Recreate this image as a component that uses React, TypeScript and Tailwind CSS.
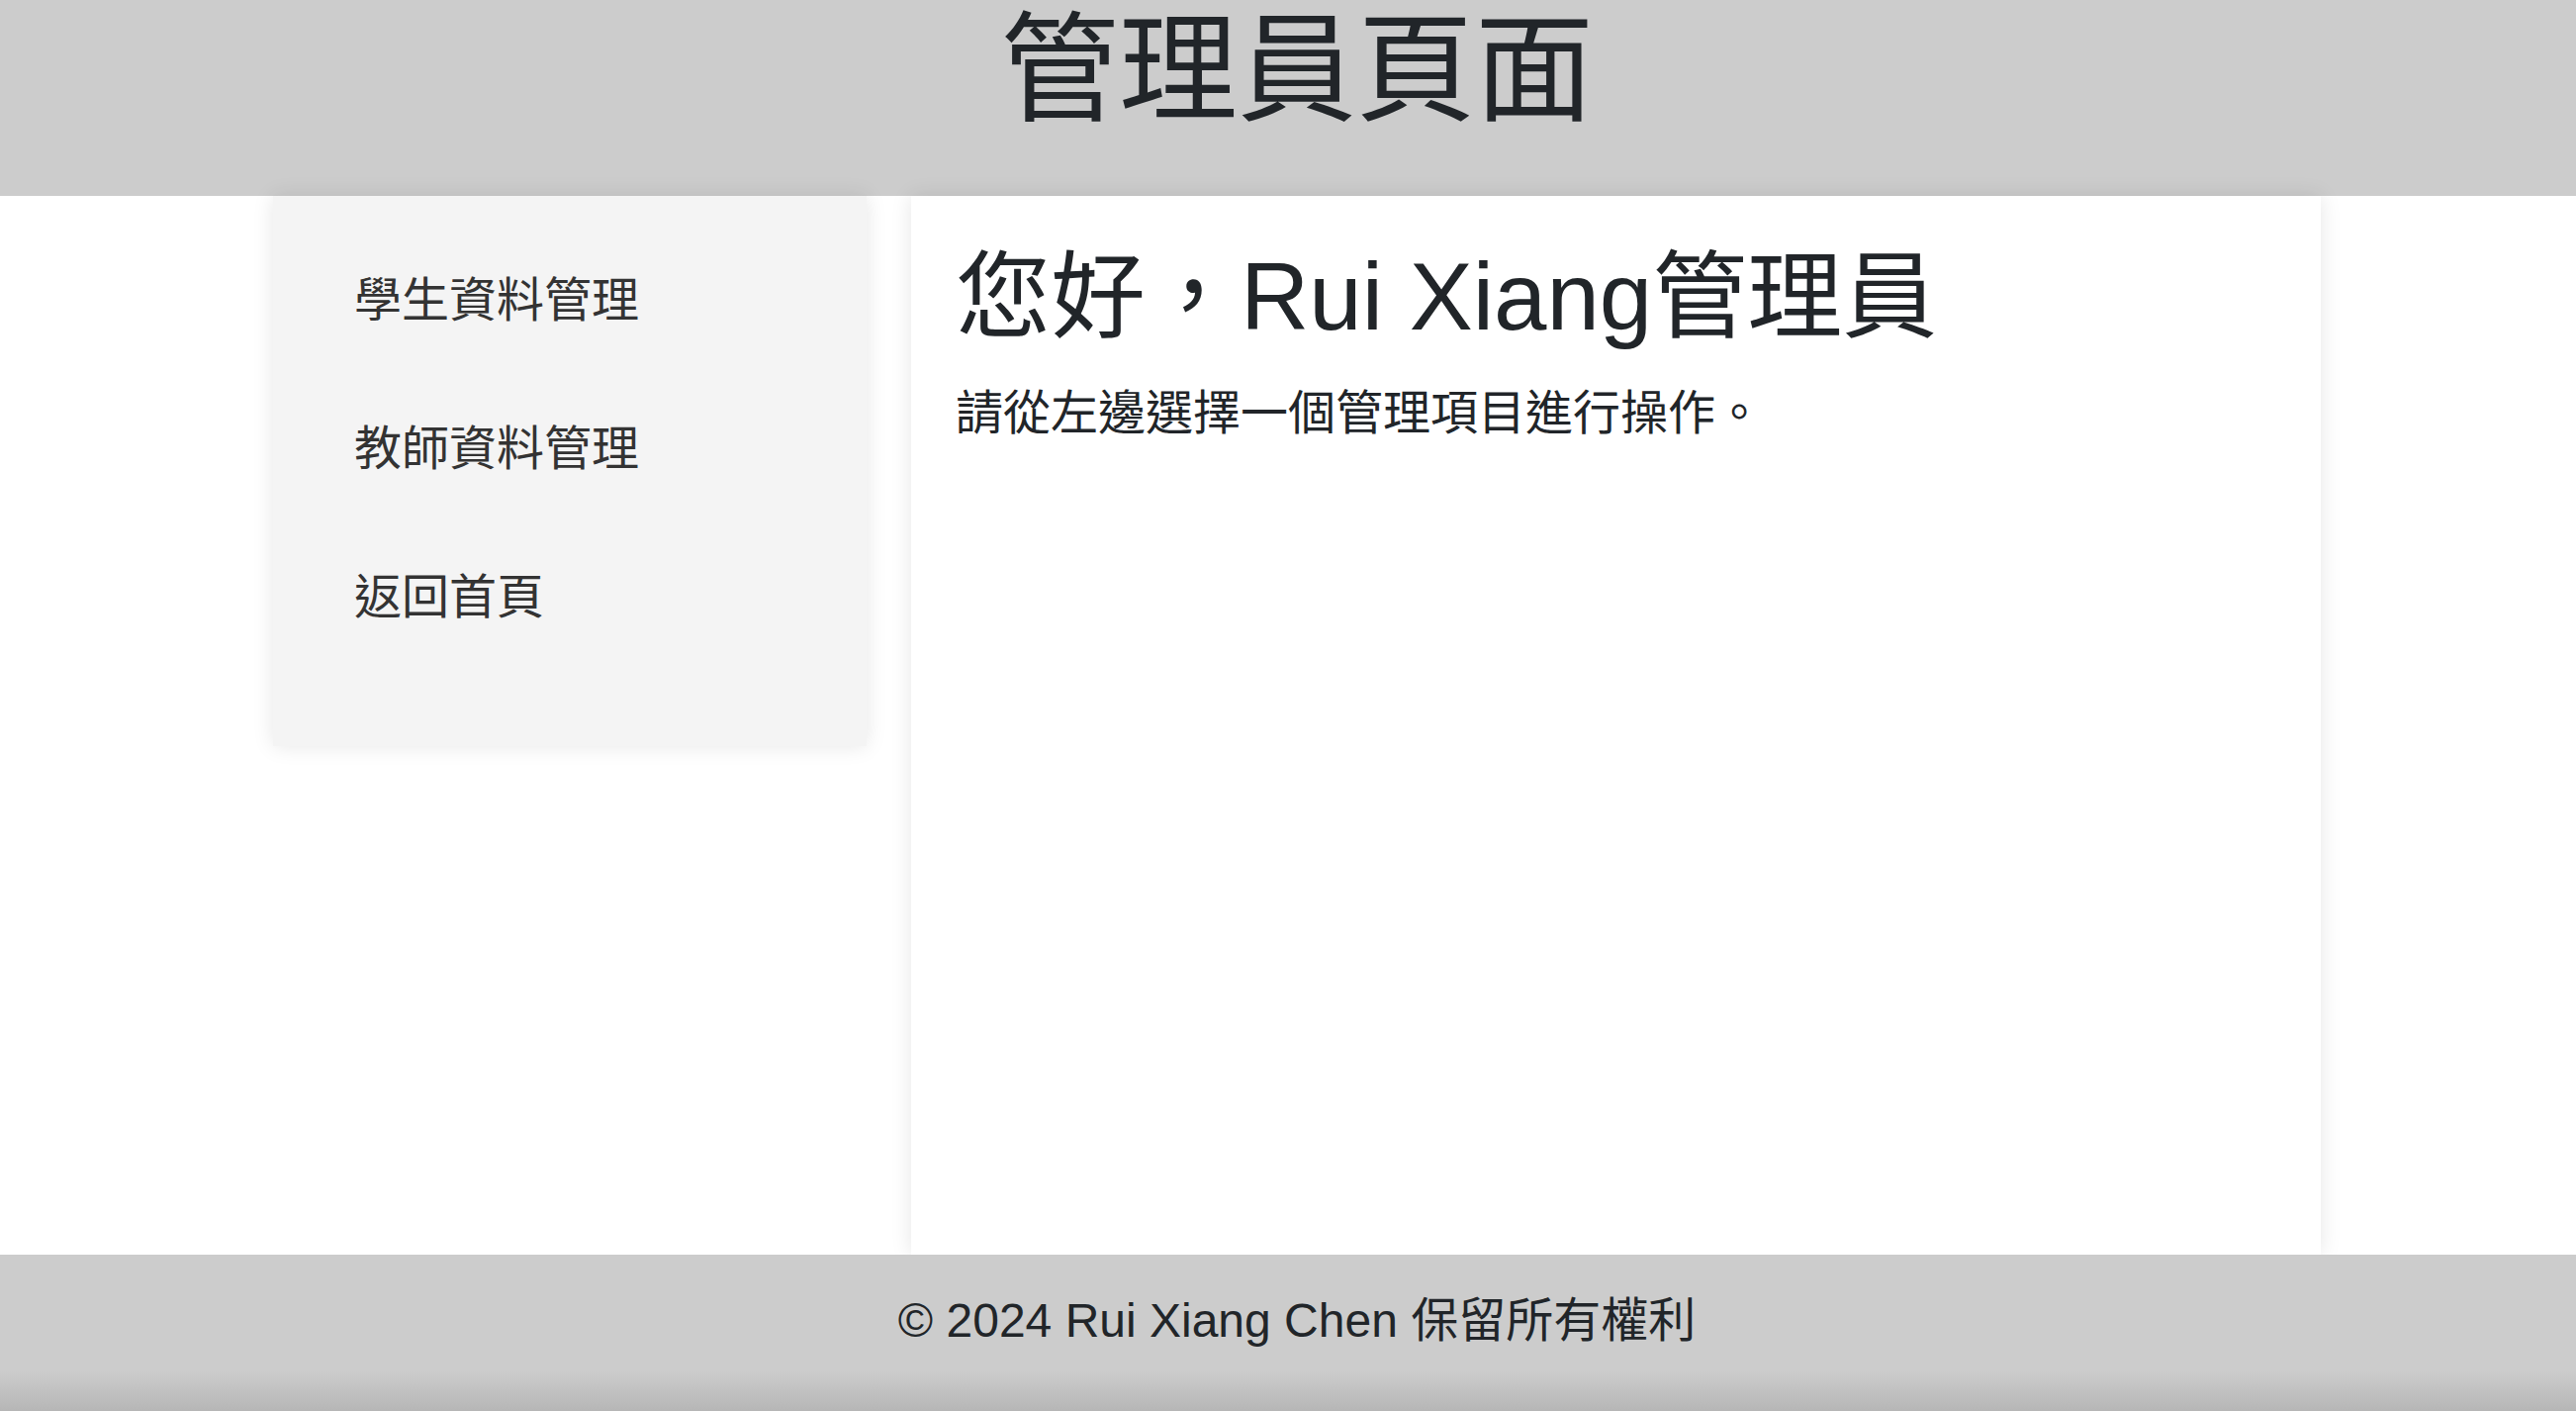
const links = ["學生資料管理", "教師資料管理", "返回首頁"];

export default function App() {
  return (
    <div className="h-[1426px] w-full overflow-hidden bg-white font-['Liberation_Sans','Noto_Sans_CJK_TC',sans-serif]">
      <div className="flex h-full w-[2622px] flex-col">
        <header className="h-[198px] shrink-0 bg-[#cccccc] pt-[11px] text-center">
          <h1 className="text-[120px] leading-[120px] text-[#212529]">管理員頁面</h1>
        </header>

        <div className="mx-auto flex min-h-0 w-[2070px] flex-1 items-start gap-[45px]">
          <nav className="w-[600px] shrink-0 bg-[#f4f4f4] pb-[114px] pl-[82px] pt-[70px] shadow-[0_0_20px_rgba(0,0,0,0.1)]">
            <ul className="flex flex-col gap-[78px]">
              {links.map((label) => (
                <li key={label}>
                  <a href="#" className="block text-[48px] leading-[72px] text-[#333333]">
                    {label}
                  </a>
                </li>
              ))}
            </ul>
          </nav>

          <main className="h-full w-[1425px] bg-white pl-[45px] pt-[47px] shadow-[0_0_20px_rgba(0,0,0,0.1)]">
            <h2 className="text-[96px] leading-[110px] text-[#212529]">您好，Rui Xiang管理員</h2>
            <p className="mt-[35px] text-[48px] leading-[56px] text-[#212529]">
              請從左邊選擇一個管理項目進行操作。
            </p>
          </main>
        </div>

        <footer className="h-[158px] shrink-0 bg-[linear-gradient(to_bottom,#cccccc_0px,#cccccc_118px,#b6b6b6_158px)] pt-[39px] text-center">
          <p className="text-[48px] leading-[56px] text-[#212529]">© 2024 Rui Xiang Chen 保留所有權利</p>
        </footer>
      </div>
    </div>
  );
}
